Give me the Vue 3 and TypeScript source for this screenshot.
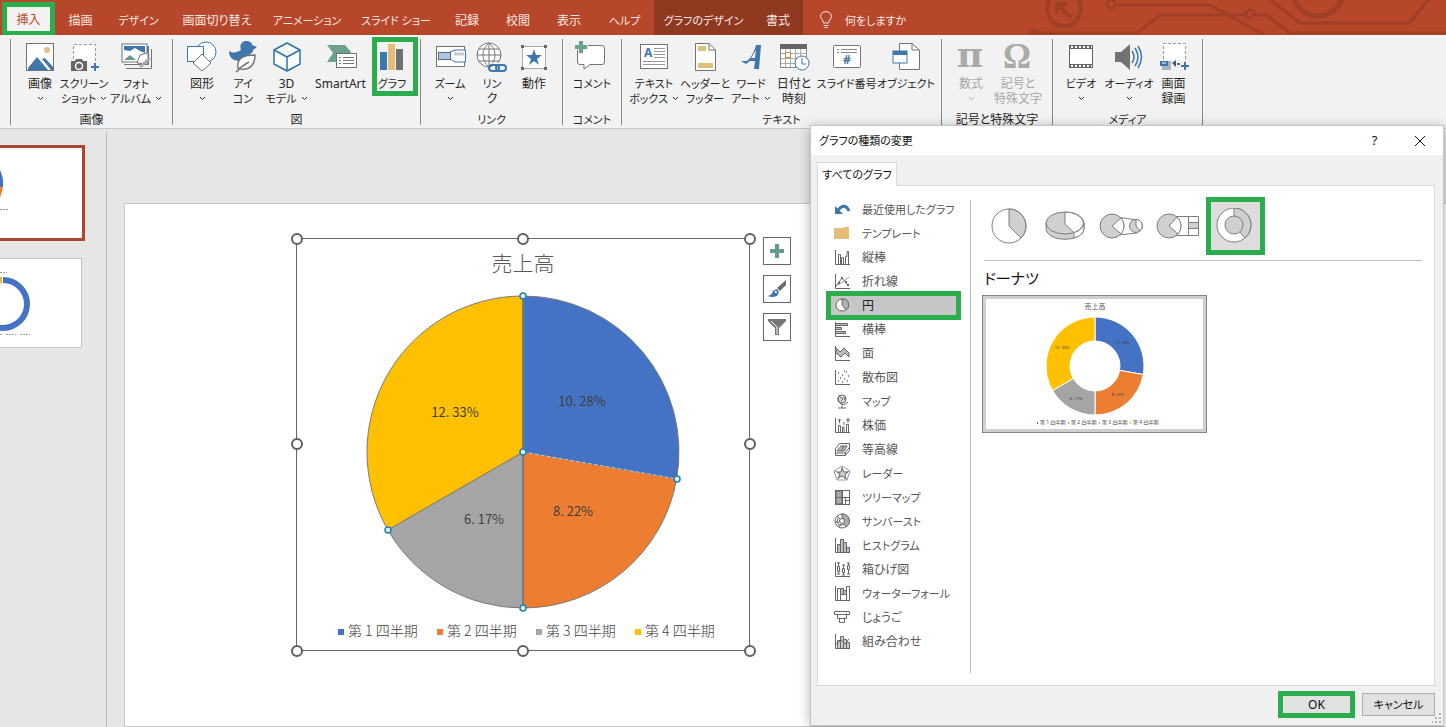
<script setup lang="ts">
import { ref } from 'vue'

interface Tool { icon: string; lines: string[]; menu?: boolean; disabled?: boolean; marked?: boolean }
interface Group { key: string; label: string; tools: Tool[] }
interface Category { name: string; icon: string }
interface Slice { name: string; label: string; value: number; color: string; x: number; y: number; px: number; py: number }

const tabs = ['挿入', '描画', 'デザイン', '画面切り替え', 'アニメーション', 'スライド ショー', '記録', '校閲', '表示', 'ヘルプ', 'グラフのデザイン', '書式']
const activeTab = ref('挿入')

// Katakana labels are set one step smaller than kanji ones.
const isKana = (s: string) => /[ァ-ヶー]{2,}/.test(s)

const g = '#737373'
const b = '#3e76ad'

const groups: Group[] = [
  { key: 'image', label: '画像', tools: [
    { lines: ['画像'], menu: true, icon: `<rect x="2.500" y="2.500" width="27" height="27" fill="#fff" stroke="${g}"/><circle cx="23" cy="9" r="3" fill="#e3bf7c"/><path d="M4 29V27L13 16L24 29ZM18 18L21 17L29 26V29H27Z" fill="${b}"/>` },
    { lines: ['スクリーン', 'ショット'], menu: true, icon: `<path d="M5.500 18V3.500H27.500V22" fill="#fff" stroke="#9a9a9a" stroke-dasharray="3 2"/><path d="M3 20H7L8 18H14L15 20H19V30H3Z" fill="#666"/><circle cx="11" cy="25" r="3.500" fill="#666" stroke="#fff" stroke-width="1.500"/><path d="M27 22V30M23 26H31" stroke="${b}" stroke-width="2"/>` },
    { lines: ['フォト', 'アルバム'], menu: true, icon: `<path d="M6 27.500H31.500V8" fill="none" stroke="${g}"/><path d="M4 23.500H28.500V5" fill="#fff" stroke="${g}"/><rect x="2" y="3" width="25" height="18" fill="#fff" stroke="${g}"/><path d="M4 5H25V12L20 10L15 7L10 10L4 9Z" fill="${b}"/><path d="M4 19L10 14L16 19Z" fill="#629c88"/><path d="M17 22L20 14L27 12L28 5V23Z" fill="#fff" stroke="${g}"/><path d="M20 26L30 17" stroke="#aaa" stroke-width="3"/>` },
  ] },
  { key: 'figure', label: '図', tools: [
    { lines: ['図形'], menu: true, icon: `<circle cx="20" cy="11" r="10" fill="#fff" stroke="${b}"/><rect x="1.500" y="5.500" width="16" height="15" fill="#fff" stroke="${b}"/><path d="M16 13L25 22L16 30L7 22Z" fill="#fff" stroke="${g}"/>` },
    { lines: ['アイ', 'コン'], icon: `<path d="M2 10C7 13 10 11 14 9C12 4 15 0 19 0C23 0 25 2 25 4L30 6L26 9C26 12 23 13 22 14L14 20C5 20 2 16 2 10Z" fill="${b}"/><path d="M9 31C13 27 18 23 22 21M11 27C9 16 19 14 28 14C28 25 21 31 11 27Z" fill="#fff" stroke="${g}" stroke-width="1.500"/>` },
    { lines: ['3D', 'モデル'], menu: true, icon: `<path d="M16 2L29 9V23L16 30L3 23V9ZM3 9L16 16L29 9M16 16V30M3 9L16 2" fill="#fff" stroke="#2b75a9" stroke-width="1.500" stroke-linejoin="round"/>` },
    { lines: ['SmartArt'], icon: `<path d="M2 4H20L26 11L20 21H2L8 12Z" fill="#6ba28f"/><rect x="11.500" y="12.500" width="20" height="14" fill="#fff" stroke="${g}"/><path d="M14 16.500H16M18 16.500H29M14 19.500H16M18 19.500H29M14 22.500H16M18 22.500H29" stroke="#777"/>` },
    { lines: ['グラフ'], marked: true, icon: `<rect x="4" y="11" width="7" height="18" fill="${b}"/><rect x="12" y="3" width="7" height="26" fill="#e5bd77"/><rect x="20" y="8" width="7" height="21" fill="#707070"/>` },
  ] },
  { key: 'link', label: 'リンク', tools: [
    { lines: ['ズーム'], menu: true, icon: `<rect x="2.500" y="5.500" width="28" height="20" fill="#fff" stroke="${g}"/><path d="M16 11L21 9H31.500V21H21L16 18" fill="#fff" stroke="${b}"/><rect x="4.500" y="11.500" width="12" height="7" fill="#b5c4d3" stroke="${b}"/><path d="M20 13H30" stroke="#c4cbd3" stroke-width="3"/>` },
    { lines: ['リン', 'ク'], icon: `<circle cx="13" cy="14" r="12" fill="#fff" stroke="${g}"/><path d="M1 14H25M3 8H23M3 20H23M13 2V26M13 2C5 9 5 19 13 26M13 2C21 9 21 19 13 26" fill="none" stroke="${g}"/><path d="M16 27H28" stroke="#f2f2f2" stroke-width="10"/><rect x="13" y="24" width="10" height="6" rx="3" fill="none" stroke="${b}" stroke-width="2"/><rect x="20" y="24" width="10" height="6" rx="3" fill="none" stroke="${b}" stroke-width="2"/>` },
    { lines: ['動作'], icon: `<path d="M4.500 5.500H27.500V27.500H4.500Z" fill="#fff" stroke="#aaa"/><path d="M3 4H6V7H3ZM26 4H29V7H26ZM3 26H6V29H3ZM26 26H29V29H26Z" fill="#666"/><path d="M16 8L18 14H24L19 18L21 24L16 20L11 24L13 18L8 14H14Z" fill="${b}"/>` },
  ] },
  { key: 'comment', label: 'コメント', tools: [
    { lines: ['コメント'], icon: `<path d="M4 4.500H26Q28.500 4.500 28.500 7V21Q28.500 23.500 26 23.500H14L8 28V23.500H4Q1.500 23.500 1.500 21V7Q1.500 4.500 4 4.500Z" fill="#fff" stroke="${g}"/><path d="M5 -1V13M-1 6H12" stroke="#f2f2f2" stroke-width="6"/><path d="M5 0V12M-1 6H11" stroke="#6ba28f" stroke-width="4"/>` },
  ] },
  { key: 'text', label: 'テキスト', tools: [
    { lines: ['テキスト', 'ボックス'], menu: true, icon: `<rect x="2.500" y="3.500" width="27" height="24" fill="#fff" stroke="${g}"/><text x="6" y="16" font-size="12" font-weight="700" fill="${b}">A</text><path d="M16 7.500H27M16 10.500H27M16 13.500H27M16 16.500H27M5 20.500H27M5 23.500H27" stroke="#999"/>` },
    { lines: ['ヘッダーと', 'フッター'], icon: `<path d="M6.500 2.500H20L26.500 9V29.500H6.500Z" fill="#fff" stroke="${g}"/><path d="M20 2V9H27" fill="none" stroke="${g}"/><path d="M9 5H17V10H9ZM9 22H24V27H9Z" fill="#e3bf7c"/>` },
    { lines: ['ワード', 'アート'], menu: true, icon: `<path d="M6 20H12C17 16 20 8 21 4H26L24 28H19L20 20H15L11 23ZM16 17H20L21 9Z" fill="${b}" fill-rule="evenodd"/>` },
    { lines: ['日付と', '時刻'], icon: `<rect x="2.500" y="4.500" width="26" height="22" fill="#fff" stroke="#888"/><path d="M2 3H29V8H2Z" fill="#666"/><path d="M7.500 8V26M12.500 8V26M17.500 8V26M22.500 8V26M3 12.500H28M3 17.500H28M3 22.500H28" stroke="#aaa"/><rect x="7.500" y="11.500" width="5" height="5" fill="#fff" stroke="#dc8741"/><circle cx="24" cy="22" r="7" fill="#fff" stroke="${b}"/><path d="M24 17V23H28" fill="none" stroke="${b}"/>` },
    { lines: ['スライド番号'], icon: `<rect x="2.500" y="4.500" width="27" height="22" rx="1" fill="#fff" stroke="${g}"/><path d="M6 8.500H8M10 8.500H26M6 11.500H8M10 11.500H26" stroke="#888"/><text x="12" y="23" font-size="12" font-weight="700" fill="${b}">#</text>` },
    { lines: ['オブジェクト'], icon: `<path d="M9.500 2.500H22L29.500 9V28.500H9.500Z" fill="#fff" stroke="${g}"/><path d="M22 2V9H29" fill="none" stroke="${g}"/><rect x="3" y="10" width="14" height="12" fill="#fff" stroke="${b}"/><path d="M3 10H17V14H3Z" fill="${b}"/>` },
  ] },
  { key: 'symbol', label: '記号と特殊文字', tools: [
    { lines: ['数式'], menu: true, disabled: true, icon: `<text x="15" y="26" text-anchor="middle" font-size="36" font-weight="700" font-family="DejaVu Serif, serif" fill="#aaa">π</text>` },
    { lines: ['記号と', '特殊文字'], disabled: true, icon: `<text x="15" y="27" text-anchor="middle" font-size="35" font-weight="700" font-family="Liberation Serif, serif" fill="#aaa">Ω</text>` },
  ] },
  { key: 'media', label: 'メディア', tools: [
    { lines: ['ビデオ'], menu: true, icon: `<rect x="4" y="4" width="24" height="23" fill="#666"/><rect x="5" y="8" width="22" height="15" fill="#fff"/><path d="M6 6H27M6 25H27" stroke="#fff" stroke-width="2" stroke-dasharray="2 2"/>` },
    { lines: ['オーディオ'], menu: true, icon: `<path d="M2 11H8L17 3V29L8 21H2Z" fill="#737373"/><path d="M19 10Q23 16 19 22M22 7Q28 16 22 25M25 5Q32 16 25 27" fill="none" stroke="${b}" stroke-width="1.500"/>` },
    { lines: ['画面', '録画'], icon: `<path d="M5.500 18V2.500H27.500V20" fill="#fff" stroke="#9a9a9a" stroke-dasharray="3 2"/><path d="M4 20H13V29H4Z" fill="#aab3c0"/><path d="M2 20H10V25H2Z" fill="${b}"/><path d="M4 22H8" stroke="#fff"/><path d="M18 19V26L14 22Z" fill="#555"/><path d="M19 23H22M27 21V29M23 25H31" stroke="${b}" stroke-width="2"/>` },
  ] },
]

const axis = '<path d="M1.500 1V15.500H16"/>'
const categories: Category[] = [
  { name: '最近使用したグラフ', icon: `<path d="M4 9Q11 1 15 10" stroke="${b}" stroke-width="3"/><path d="M1 5V13H9Z" fill="${b}" stroke="none"/>` },
  { name: 'テンプレート', icon: '<path d="M0 3H9L10 2H15V14H0Z" fill="#e6bd78" stroke="none"/>' },
  { name: '縦棒', icon: axis + '<path d="M4.500 15V5.500H6.500V15M7.500 15V8.500H9.500V15M11.500 15V7.500H13V2.500H14.500V15"/>' },
  { name: '折れ線', icon: axis + '<path d="M2 13L8 5L14 12" /><path d="M3 12L9 9L15 4" stroke="#999"/><path d="M7 4H9V6H7ZM4 9H6V11H4ZM11 8H13V10H11ZM13 11H15V13H13Z" fill="#666" stroke="none"/>' },
  { name: '円', icon: '<circle cx="8" cy="8" r="6" fill="#fff"/><path d="M8 2A6 6 0 0 1 12 13L8 8Z" fill="#b0b0b0"/>' },
  { name: '横棒', icon: axis + '<path d="M2 2.500H13.500V4.500H2M2 6.500H7.500V8.500H2M2 10.500H11.500V12.500H2" fill="#bbb"/>' },
  { name: '面', icon: axis + '<path d="M2 3L6 7L10 3L15 8V12L11 8L7 12L2 8Z" fill="#bbb"/>' },
  { name: '散布図', icon: axis + '<path d="M4 4H5M8 6H9M12 3H13M14 7H15M6 9H7M10 10H11M4 12H5M13 12H14M8 13H9M10 2H11" stroke-width="1.500"/>' },
  { name: 'マップ', icon: '<circle cx="8" cy="6" r="4" fill="#ddd"/><path d="M6 2Q1 7 7 11Q11 13 14 9M8 12V15M4 15H12M6 4L9 6L7 8M10 4L11 7"/>' },
  { name: '株価', icon: axis + '<path d="M4.500 15V8.500H6.500V15M8.500 15V10H10V15M12.500 15V7.500H14.500V15M5.500 2V6M10 5V8M14 1V6M4 3H7M12 3H16"/>' },
  { name: '等高線', icon: '<path d="M1.500 7.500L5.500 2.500H15.500V9.500L11.500 14.500H1.500Z" fill="#f4f4f4"/><path d="M3 10L7 5H13L10 10Z" fill="#bbb"/><path d="M2 12H11L15 7M7 10L10 5M11.500 14V12"/>' },
  { name: 'レーダー', icon: '<path d="M8 1L16 6L13 15H3L0 6ZM8 1V9L3 15M8 9L13 15M0 6L8 9L16 6" stroke="#999"/><path d="M8 3L10 7L14 7L11 10L12 14L8 11L4 13L6 9L3 7H7Z" fill="#ccc"/>' },
  { name: 'ツリーマップ', icon: '<rect x="1.500" y="1.500" width="14" height="14" fill="#fff"/><path d="M2 2H8V15H2Z" fill="#aaa"/><path d="M2 8.500H15M8.500 2V15M11.500 9V15M12 11.500H15"/>' },
  { name: 'サンバースト', icon: '<circle cx="8" cy="8" r="7" fill="#fff"/><path d="M8 1A7 7 0 0 1 12 14L8 8Z" fill="#aaa"/><circle cx="8" cy="8" r="2.500" fill="#fff"/><path d="M4 5Q2 9 5 12Q9 13 10 11M1 9H5M3 3L6 6M5 14L7 11"/>' },
  { name: 'ヒストグラム', icon: axis + '<path d="M3.500 15V7.500H6.500V15M6.500 15V2.500H9.500V15M9.500 15V5.500H12.500V15M12.500 15V10.500H15.500V15" fill="#bbb"/>' },
  { name: '箱ひげ図', icon: axis + '<path d="M4.500 1V13M3 2H6M3 13H6M9.500 4V14M8 4H11M8 14H11M14.500 2V13M13 2H16M13 13H16"/><path d="M3.500 5.500H5.500V10.500H3.500ZM8.500 7.500H10.500V11.500H8.500ZM13.500 4.500H15.500V8.500H13.500Z" fill="#fff"/>' },
  { name: 'ウォーターフォール', icon: axis + '<path d="M3.500 15V3.500H6.500V15M12.500 15V1.500H15.500V15"/><path d="M6.500 3.500H9.500V9.500H6.500ZM9.500 5.500H12.500V9.500H9.500Z" fill="#bbb"/>' },
  { name: 'じょうご', icon: '<path d="M0.500 2.500H15.500V5.500H0.500ZM3.500 5.500H12.500V9.500H3.500ZM5.500 9.500H10.500V13.500H5.500Z" fill="#fff"/>' },
  { name: '組み合わせ', icon: axis + '<path d="M3.500 15V7.500H6.500V15M6.500 15V3.500H9.500V15M9.500 15V6.500H12.500V15M12.500 15V9.500H15.500V15" fill="#ccc"/><path d="M2 11L7 7L11 11L15 6"/>' },
]
const selected = ref('円')

const variants = [
  { name: '円', icon: '<circle cx="24" cy="18" r="17" fill="#fff"/><path d="M24 1A17 17 0 0 1 36 30L24 18Z" fill="#d0d0d0"/>' },
  { name: '3-D 円', icon: '<path d="M5 15V20C5 35 43 35 43 20V15Z" fill="#d0d0d0"/><path d="M33 24.500V30Q43 27 43 20V15Z" fill="#fff"/><ellipse cx="24" cy="15" rx="19" ry="11" fill="#d0d0d0"/><path d="M24 4A19 11 0 0 1 33 24.500L24 16Z" fill="#fff"/>' },
  { name: '補助円グラフ付き円', icon: '<path d="M20 9L40 12M21 27L40 25"/><circle cx="15" cy="18" r="12" fill="#d0d0d0"/><path d="M24 10A12 12 0 0 1 24 26L15 18Z" fill="#fff"/><circle cx="39" cy="18" r="6.500" fill="#d0d0d0"/><path d="M39 11.500A6.500 6.500 0 0 1 43 23L39 18Z" fill="#fff"/>' },
  { name: '補助縦棒グラフ付き円', icon: '<path d="M20 8.500H45.500V27.500H21M35.500 8V27"/><circle cx="16" cy="18" r="12" fill="#d0d0d0"/><path d="M24 9A12 12 0 0 1 25 26L16 18Z" fill="#fff"/><path d="M35.500 14.500H45.500V20.500H35.500Z" fill="#d0d0d0"/>' },
  { name: 'ドーナツ', icon: '<circle cx="22" cy="17" r="17" fill="#fff"/><path d="M22 0A17 17 0 0 1 33 30L22 17Z" fill="#d0d0d0"/><circle cx="22" cy="17" r="9" fill="#d0d0d0"/>' },
]
const variant = ref('ドーナツ')

const slices: Slice[] = [
  { name: '第 1 四半期', label: '10. 28%', value: 10.28, color: '#4472c4', x: 292, y: 176, px: 136, py: 45 },
  { name: '第 2 四半期', label: '8. 22%', value: 8.22, color: '#ed7d31', x: 283, y: 286, px: 132, py: 97 },
  { name: '第 3 四半期', label: '6. 17%', value: 6.17, color: '#a5a5a5', x: 194, y: 294, px: 90, py: 101 },
  { name: '第 4 四半期', label: '12. 33%', value: 12.33, color: '#ffc000', x: 165, y: 187, px: 76, py: 50 },
]
const total = slices.reduce((s, d) => s + d.value, 0)

function wedges(cx: number, cy: number, outer: number, inner: number) {
  let sum = 0
  const at = (r: number, a: number) => `${cx + r * Math.sin(a)} ${cy - r * Math.cos(a)}`
  return slices.map((s) => {
    const from = (sum / total) * Math.PI * 2
    sum += s.value
    const to = (sum / total) * Math.PI * 2
    return { color: s.color, d: `M${at(outer, from)}A${outer} ${outer} 0 0 1 ${at(outer, to)}L${at(inner, to)}A${inner} ${inner} 0 0 0 ${at(inner, from)}Z` }
  })
}
const pie = wedges(233, 222, 156, 0)
const donut = wedges(109, 67, 49, 25)
const frameHandles = [[7, 9], [233, 9], [460, 9], [7, 214], [460, 214], [7, 421], [233, 421], [460, 421]]
const pieHandles = [[233, 66], [387, 249], [233, 378], [98, 300], [233, 222]]
</script>

<template>
  <div class="app">
    <header class="bar">
      <nav class="tabs">
        <button v-for="(t, i) in tabs" :key="t" class="tab" :class="{ on: t === activeTab, context: i > 9, kana: isKana(t) }" @click="activeTab = t">{{ t }}</button>
      </nav>
      <label class="tell">
        <svg width="14" height="18" viewBox="0 0 14 18" fill="none" stroke="#fbe9e4"><path d="M4.500 12C4.500 9 1.500 8 1.500 5.500C1.500 -1 12.500 -1 12.500 5.500C12.500 8 9.500 9 9.500 12ZM4.500 14.500H9.500M5.500 16.500H8.500" /></svg>
        <input type="text" class="kana" aria-label="何をしますか" placeholder="何をしますか">
      </label>
      <svg class="circuit" width="420" height="35" viewBox="1026 0 420 35" fill="none" stroke="#9f3f26" stroke-width="3">
        <circle cx="1064" cy="9" r="17" stroke-width="4" />
        <path d="M1057 14V4H1067M1058 5L1071 18" stroke-width="4" />
        <circle cx="1111" cy="4" r="4" />
        <path d="M1115 5H1210L1264 35M1031 33H1137L1160 15H1246M1254 15H1266L1290 33H1446M1268 -2L1300 23H1409L1430 -2" />
        <circle cx="1250" cy="14" r="4" />
        <circle cx="1034" cy="34" r="4" />
        <circle cx="1318" cy="-9" r="25" stroke-width="5" />
        <path d="M1308 0L1315 -4" stroke-width="4" />
      </svg>
    </header>

    <section class="ribbon">
      <div v-for="grp in groups" :key="grp.key" class="group" :class="grp.key">
        <div class="tools">
          <button v-for="t in grp.tools" :key="t.lines[0]" class="tool" :class="{ marked: t.marked }" :disabled="t.disabled">
            <svg class="glyph" width="32" height="32" viewBox="0 0 32 32" v-html="t.icon" />
            <span v-for="(l, i) in t.lines" :key="i" class="line" :class="{ kana: isKana(l) }">{{ l }}<svg v-if="t.menu && i === 1" width="7" height="5" viewBox="0 0 7 5"><path d="M1 1L3.500 3.500L6 1" fill="none" stroke="currentColor" /></svg></span>
            <span v-if="t.menu && t.lines.length === 1" class="line"><svg width="7" height="5" viewBox="0 0 7 5"><path d="M1 1L3.500 3.500L6 1" fill="none" stroke="currentColor" /></svg></span>
          </button>
        </div>
        <div class="caption" :class="{ kana: isKana(grp.label) }">{{ grp.label }}</div>
      </div>
    </section>

    <main class="work">
      <aside class="thumbs">
        <button class="thumb current" aria-label="スライド 1">
          <svg width="82" height="90" viewBox="0 0 82 90"><circle cx="-29" cy="36" r="32" fill="#ed7d31" /><path d="M-29 36V4A32 32 0 0 1 3 39Z" fill="#4472c4" /><path d="M0 61.500H9" stroke="#999" stroke-dasharray="2 1" /></svg>
        </button>
        <button class="thumb" aria-label="スライド 2">
          <svg width="81" height="88" viewBox="0 0 81 88"><circle cx="3" cy="45" r="24" fill="none" stroke="#4472c4" stroke-width="6" /><path d="M0 21H2" stroke="#e3b93c" stroke-width="6" /><path d="M2.500 18V24" stroke="#fff" /><path d="M0 75.500H2M6 75.500H16M20 75.500H30M0 13.500H7" stroke="#999" stroke-dasharray="2 1" /></svg>
        </button>
      </aside>
      <div class="canvas">
        <div class="slide">
          <svg class="chart" width="467" height="430" viewBox="0 0 467 430">
            <rect x="6.500" y="8.500" width="453" height="412" fill="none" stroke="#666" />
            <text class="chart-title" x="233" y="41" text-anchor="middle">売上高</text>
            <path v-for="w in pie" :key="w.color" :d="w.d" :fill="w.color" stroke="#7a7a7a" />
            <path d="M233 66V378" stroke="#7a7a7a" stroke-width="2" />
            <path d="M233 222L387 249" stroke="#c9c9c9" stroke-dasharray="4 2" />
            <text v-for="s in slices" :key="s.label" class="value" :x="s.x" :y="s.y" text-anchor="middle">{{ s.label }}</text>
            <g v-for="(s, i) in slices" :key="s.name">
              <rect :x="48 + i * 99" y="399" width="6" height="6" :fill="s.color" />
              <text class="key" :x="58 + i * 99" y="406">{{ s.name }}</text>
            </g>
            <circle v-for="(h, i) in frameHandles" :key="i" :cx="h[0]" :cy="h[1]" r="5" fill="#fff" stroke="#5f5f5f" stroke-width="2" />
            <circle v-for="(h, i) in pieHandles" :key="'p' + i" :cx="h[0]" :cy="h[1]" r="3" fill="#d5f2ff" stroke="#2380ad" stroke-width="1.500" />
          </svg>
          <div class="side">
            <button aria-label="グラフ要素"><svg width="26" height="26" viewBox="0 0 26 26"><path d="M13 6V20M6 13H20" stroke="#629c88" stroke-width="4" /></svg></button>
            <button aria-label="グラフ スタイル"><svg width="26" height="26" viewBox="0 0 26 26"><path d="M22 4V9L16 15L13 12Z" fill="#6b6b6b" /><path d="M13 13L15 16L13 20Q8 22 4 20Q8 19 9 15Z" fill="#3e76ad" /><path d="M11 14L14 16L12 18L10 16Z" fill="#fff" stroke="#3e76ad" /></svg></button>
            <button aria-label="グラフ フィルター"><svg width="26" height="26" viewBox="0 0 26 26"><path d="M4 5H22V7L15 14V21H11V14L4 7Z" fill="#777" /><path d="M7 7L13 13V20" fill="none" stroke="#fff" /></svg></button>
          </div>
        </div>
      </div>
    </main>

    <section class="dialog" role="dialog" aria-label="グラフの種類の変更">
      <div class="title">
        <span class="kana">グラフの種類の変更</span>
        <button aria-label="ヘルプ">?</button>
        <button aria-label="閉じる"><svg width="12" height="12" viewBox="0 0 12 12"><path d="M1 1L11 11M11 1L1 11" stroke="#111" /></svg></button>
      </div>
      <div class="body">
        <button class="sheet-tab kana">すべてのグラフ</button>
        <div class="panel">
          <div class="list">
            <button v-for="c in categories" :key="c.name" class="cat" :class="{ on: c.name === selected, kana: isKana(c.name) }" @click="selected = c.name">
              <svg width="17" height="17" viewBox="0 0 17 17" fill="none" stroke="#666" v-html="c.icon" />{{ c.name }}
            </button>
          </div>
          <div class="rule" />
          <div class="detail">
            <div class="variants">
              <button v-for="v in variants" :key="v.name" class="variant" :class="{ on: v.name === variant }" :aria-label="v.name" @click="variant = v.name">
                <svg width="48" height="36" viewBox="0 0 48 36" fill="none" stroke="#7d7d7d" v-html="v.icon" />
              </button>
            </div>
            <h2>ドーナツ</h2>
            <div class="preview">
              <svg width="217" height="130" viewBox="0 0 217 130">
                <text x="109" y="10" text-anchor="middle" font-size="7" fill="#555">売上高</text>
                <path v-for="w in donut" :key="w.color" :d="w.d" :fill="w.color" stroke="#fff" />
                <text v-for="s in slices" :key="s.label" :x="s.px" :y="s.py" text-anchor="middle" font-size="4" fill="#444">{{ s.label }}</text>
                <g v-for="(s, i) in slices" :key="s.name">
                  <rect :x="51 + i * 31" y="123" width="1" height="2" :fill="s.color" />
                  <text :x="54 + i * 31" y="125" font-size="5" fill="#444">{{ s.name }}</text>
                </g>
              </svg>
            </div>
          </div>
        </div>
        <div class="actions">
          <button class="ok">OK</button>
          <button class="cancel kana">キャンセル</button>
        </div>
      </div>
      <svg class="grip" width="10" height="10" viewBox="0 0 10 10"><path d="M7 0H9V2H7ZM7 4H9V6H7ZM3 4H5V6H3ZM7 8H9V10H7ZM3 8H5V10H3ZM-1 8H1V10H-1Z" fill="#b5b5b5" /></svg>
    </section>
  </div>
</template>

<style>
body { margin: 0; overflow: hidden; }
</style>

<style scoped>
.app {
  position: relative;
  display: flex;
  flex-direction: column;
  height: 100vh;
  overflow: hidden;
  background: #e6e6e6;
  color: #262626;
  font: 12px/15px "Noto Sans", "Noto Sans CJK JP", sans-serif;
  font-feature-settings: "palt";
}
button {
  padding: 0;
  border: 0;
  background: none;
  color: inherit;
  font: inherit;
  font-feature-settings: inherit;
  white-space: nowrap;
}
svg { display: block; flex: none; }

.bar { display: flex; height: 35px; background: #b7472a; color: #fbe9e4; overflow: hidden; }
.tabs {
  display: grid;
  grid-template-columns: 53px 51px 65px 92px 88px 90px 52px 50px 52px 59px 99px 50px;
  padding-left: 2px;
}
.tab { padding-top: 5px; }
.tab.context { background: #8f3921; }
.tab.on { box-sizing: border-box; height: 34px; margin-top: 2px; padding: 0; border: 5px solid #2bac4d; background: #f4f2f1; color: #b7472a; }
.tell { display: flex; align-items: center; gap: 12px; padding: 5px 0 0 16px; }
.tell input { width: 120px; padding: 0; border: 0; background: none; color: inherit; font: inherit; font-feature-settings: inherit; outline: 0; }
.tell input::placeholder { color: #fbe9e4; opacity: 1; }
.circuit { margin-left: auto; }

.ribbon { display: flex; height: 93px; padding-left: 10px; border-bottom: 1px solid #c8c8c8; background: #f2f2f2; }
.group { display: flex; flex-direction: column; box-sizing: border-box; height: 86px; margin-top: 4px; border-right: 1px solid #8a8a8a; }
.image { border-left: 1px solid #8a8a8a; }
.tools { display: grid; flex: 1; }
.tool { position: relative; display: flex; flex-direction: column; align-items: center; padding-top: 2px; }
.tool:disabled { color: #a8a8a8; }
.glyph { margin-bottom: 3px; overflow: visible; }
.line { display: flex; align-items: center; justify-content: center; gap: 4px; height: 15px; }
.marked::after { content: ""; position: absolute; inset: -2px -5px 16px 1px; border: 5px solid #2bac4d; }
.caption { height: 15px; margin-bottom: -2px; text-align: center; }
.image .tools { grid-template-columns: 44px 44px 60px; padding: 0 6px 0 7px; }
.figure .tools { grid-template-columns: 42px 40px 47px 61px 42px; padding: 0 7px 0 8px; }
.link .tools { grid-template-columns: 42px 42px 42px; padding: 0 7px 0 8px; }
.comment .tools { grid-template-columns: 58px; }
.text .tools { grid-template-columns: 52px 50px 42px 44px 61px 58px; padding: 0 6px; }
.symbol .tools { grid-template-columns: 40px 54px; padding: 0 7px 0 9px; }
.media .tools { grid-template-columns: 38px 58px 31px; padding: 0 13px 0 9px; }

.work { display: flex; flex: 1; min-height: 0; }
.thumbs { box-sizing: border-box; width: 107px; margin-top: 2px; padding-top: 14px; border-right: 1px solid #bdbdbd; }
.thumb { display: block; margin-bottom: 17px; border: 1px solid #c4c4c4; border-left: 0; background: #fff; }
.thumb.current { border: 3px solid #a8492f; border-left: 0; }
.canvas { flex: 1; padding: 74px 0 0 17px; }
.slide { display: flex; align-items: flex-start; gap: 6px; height: 100%; box-sizing: border-box; padding: 26px 0 0 165px; border: 1px solid #c6c6c6; border-right: 0; background: #fff; }
.chart-title { font-size: 21px; font-weight: 300; fill: #595959; }
.value { font-family: "Noto Sans CJK JP", sans-serif; font-size: 13px; fill: #404040; }
.key { font-family: "Noto Sans CJK JP", sans-serif; font-size: 14px; font-weight: 300; fill: #404040; }
.side { display: flex; flex-direction: column; gap: 10px; padding-top: 7px; }
.side button { border: 1px solid #666; background: #fff; }

.dialog {
  position: absolute;
  top: 126px;
  right: 3px;
  bottom: 2px;
  display: flex;
  flex-direction: column;
  width: 632px;
  background: #f0f0f0;
  box-shadow: 0 0 0 1px #c4c4c4, 0 2px 12px rgba(0, 0, 0, 0.35);
  color: #111;
}
.title { display: flex; align-items: center; height: 29px; padding: 0 1px 0 8px; background: #fff; }
.title span { flex: 1; }
.title button { display: flex; justify-content: center; width: 45px; font-size: 13px; }
.body { display: flex; flex: 1; flex-direction: column; align-items: stretch; min-height: 0; padding: 7px 8px 7px 6px; }
.sheet-tab { position: relative; align-self: flex-start; width: 80px; height: 24px; margin-bottom: -1px; border: 1px solid #d9d9d9; border-bottom: 0; background: #fff; }
.panel { display: flex; flex: 1; box-sizing: border-box; min-height: 0; border: 1px solid #d9d9d9; background: #fff; }
.list { width: 152px; padding-top: 11px; color: #555; }
.rule { width: 1px; margin: 14px 0 12px; background: #bdbdbd; }
.cat { display: flex; align-items: center; gap: 11px; box-sizing: border-box; width: 135px; height: 24px; margin-left: 8px; padding-left: 8px; }
.cat.on { height: 29px; margin-top: -2px; margin-bottom: -3px; padding-left: 3px; border: 5px solid #2bac4d; background: #c6c6c6; color: #222; }
.detail { flex: 1; padding: 11px 12px 0 11px; }
.variants { display: flex; align-items: flex-start; gap: 8px; height: 63px; margin-left: 2px; padding-left: 1px; border-bottom: 1px solid #bdbdbd; }
.variant { display: flex; align-items: center; justify-content: center; box-sizing: border-box; width: 48px; height: 58px; }
.variant.on { width: 59px; margin-left: -3px; border: 5px solid #2bac4d; background: #dedcdc; }
h2 { margin: 6px 0 6px 2px; font-size: 15px; line-height: 22px; font-weight: 400; }
.preview { display: inline-block; border: 1px solid #848484; background: #fff; box-shadow: inset 0 0 0 3px #cfcfcf; padding: 3px; }
.actions { display: flex; justify-content: flex-end; align-items: center; gap: 7px; margin-top: 5px; }
.ok { box-sizing: border-box; width: 77px; height: 27px; border: 5px solid #2bac4d; background: #e1e1e1; }
.cancel { box-sizing: border-box; width: 73px; height: 23px; border: 1px solid #adadad; background: #e1e1e1; }
.grip { position: absolute; right: 1px; bottom: 2px; }
.kana, .tell .kana { font-size: 11px; }
</style>
